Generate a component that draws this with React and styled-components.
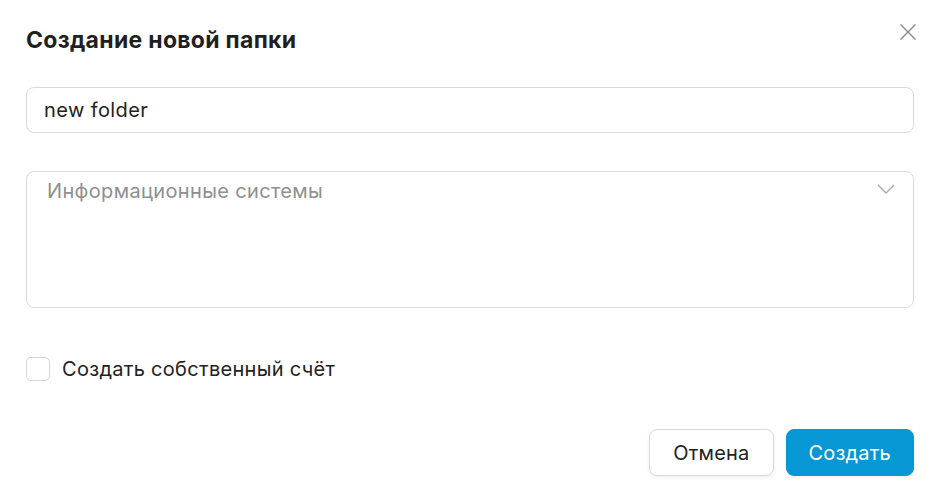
import React, { useState } from 'react';
import styled, { createGlobalStyle } from 'styled-components';

const GlobalStyle = createGlobalStyle`
  html, body {
    margin: 0;
    padding: 0;
    background: #fff;
  }
  body {
    font-family: Inter, "Noto Sans", sans-serif;
    color: #222;
  }
`;

const App = () => {
  const [name, setName] = useState('new folder');
  const [own, setOwn] = useState(false);

  return (
    <>
      <GlobalStyle />
      <Modal>
        <Header>
          <Title>Создание новой папки</Title>
          <CloseButton aria-label="Закрыть">
            <svg width="18" height="18" viewBox="0 0 18 18">
              <path d="M1.5 1.5 L16.5 16.5 M16.5 1.5 L1.5 16.5" stroke="#8a8a8a" strokeWidth="1.4" fill="none" />
            </svg>
          </CloseButton>
        </Header>

        <TextInput value={name} onChange={(e) => setName(e.target.value)} />

        <SelectBox>
          <Placeholder>Информационные системы</Placeholder>
          <Chevron width="18" height="10" viewBox="0 0 18 10">
            <path d="M1 1 L9 9 L17 1" stroke="#a8a8a8" strokeWidth="1.3" fill="none" />
          </Chevron>
        </SelectBox>

        <CheckRow onClick={() => setOwn(!own)}>
          <Box $checked={own} />
          <CheckLabel>Создать собственный счёт</CheckLabel>
        </CheckRow>

        <Footer>
          <Button>Отмена</Button>
          <Button $primary>Создать</Button>
        </Footer>
      </Modal>
    </>
  );
};

const Modal = styled.div`
  width: 936px;
  height: 496px;
  box-sizing: border-box;
  padding: 20px 22px 20px 26px;
  display: flex;
  flex-direction: column;
`;

const Header = styled.div`
  display: flex;
  justify-content: space-between;
  align-items: flex-start;
  height: 42px;
`;

const Title = styled.h2`
  margin: 0;
  font-size: 23px;
  font-weight: 700;
  color: #1f1f1f;
  line-height: 40px;
  letter-spacing: 0.3px;
`;

const CloseButton = styled.button`
  border: none;
  background: none;
  padding: 0;
  margin-top: 3px;
  margin-right: -3px;
  cursor: pointer;
  display: flex;
`;

const TextInput = styled.input`
  margin-top: 25px;
  width: 888px;
  height: 46px;
  box-sizing: border-box;
  border: 1px solid #dadada;
  border-radius: 8px;
  padding: 0 17px;
  font-family: inherit;
  font-size: 20px;
  letter-spacing: 0.4px;
  color: #222;
  outline: none;
`;

const SelectBox = styled.div`
  margin-top: 38px;
  width: 888px;
  height: 137px;
  box-sizing: border-box;
  border: 1px solid #dadada;
  border-radius: 8px;
  padding: 5px 18px 0 20px;
  display: flex;
  justify-content: space-between;
  align-items: flex-start;
`;

const Placeholder = styled.span`
  font-size: 20px;
  letter-spacing: 0.35px;
  line-height: 28px;
  color: #8f8f8f;
`;

const Chevron = styled.svg`
  margin-top: 7px;
`;

const CheckRow = styled.label`
  margin-top: 49px;
  display: flex;
  align-items: center;
  gap: 12px;
  cursor: pointer;
`;

const Box = styled.span`
  width: 24px;
  height: 24px;
  box-sizing: border-box;
  border: 1px solid #d6d6d6;
  border-radius: 5px;
  background: ${(p) => (p.$checked ? '#0797d5' : '#fff')};
`;

const CheckLabel = styled.span`
  font-size: 20px;
  letter-spacing: 0.3px;
  color: #222;
`;

const Footer = styled.div`
  margin-top: auto;
  display: flex;
  justify-content: flex-end;
  gap: 12px;
`;

const Button = styled.button`
  height: 47px;
  padding: 0 ${(p) => (p.$primary ? '22px' : '23px')};
  border-radius: 8px;
  font-family: inherit;
  font-size: 20px;
  letter-spacing: 0.2px;
  cursor: pointer;
  border: 1px solid ${(p) => (p.$primary ? '#0797d5' : '#d9d9d9')};
  background: ${(p) => (p.$primary ? '#0797d5' : '#fff')};
  color: ${(p) => (p.$primary ? '#fff' : '#222')};
  box-shadow: 0 2px 4px rgba(0, 0, 0, 0.06);
`;

export default App;
